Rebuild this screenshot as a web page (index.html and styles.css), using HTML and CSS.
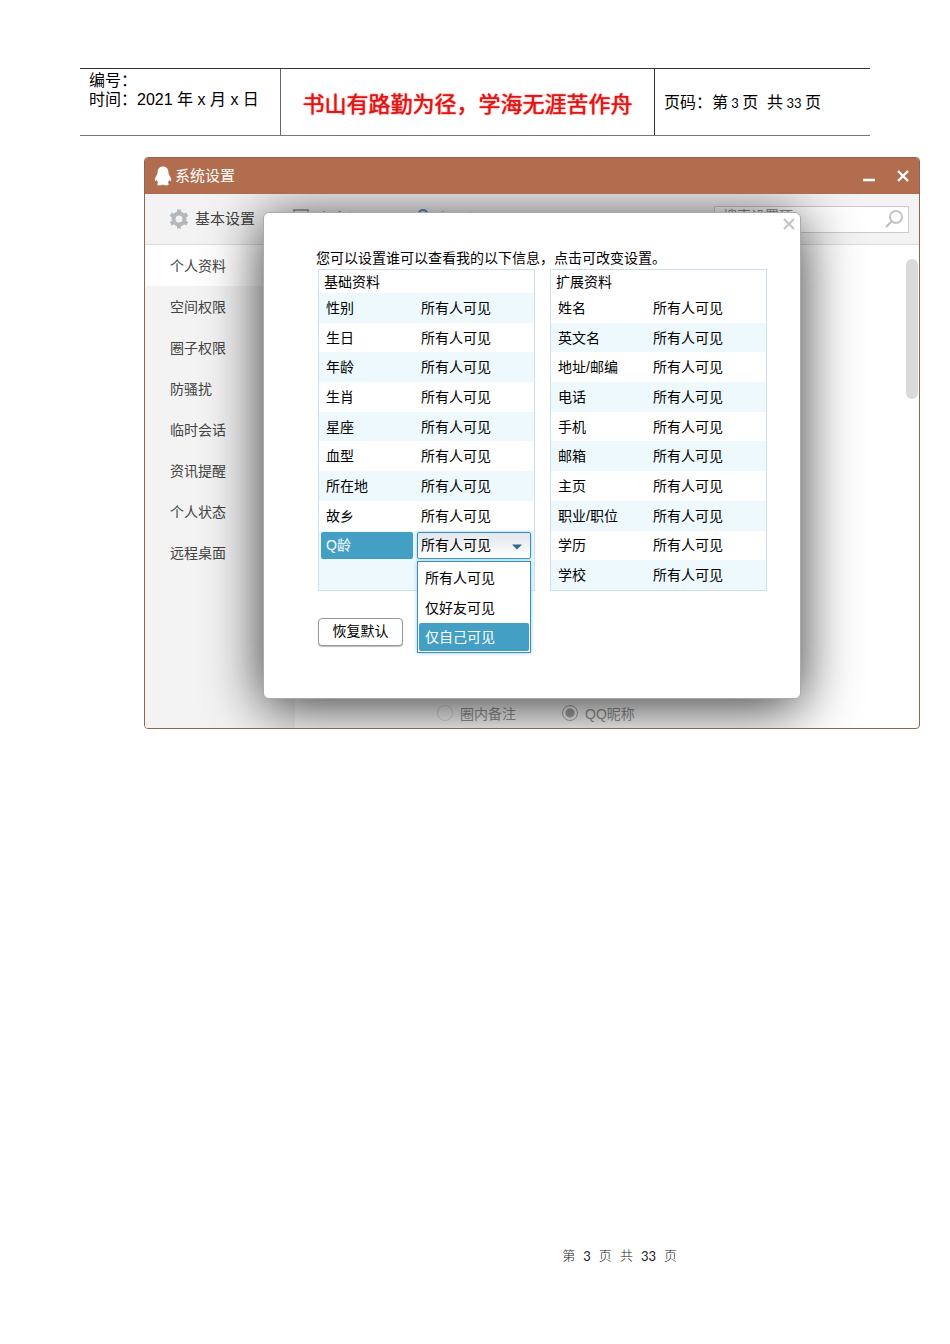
FILE: index.html
```html
<!DOCTYPE html>
<html lang="zh-CN">
<head>
  <meta charset="UTF-8" />
  <meta name="viewport" content="width=device-width, initial-scale=1" />
  <title>系统设置</title>
  <link rel="stylesheet" href="styles.css">
</head>
<body>

  <header class="page-header">
    <div class="doc-info">
      <div>编号：</div>
      <div>时间：2021 年 x 月 x 日</div>
    </div>
    <div class="motto">书山有路勤为径，学海无涯苦作舟</div>
    <div class="page-no">页码：第<span class="num"> 3 </span>页&nbsp; 共<span class="num"> 33 </span>页</div>
  </header>

  <main class="window">
    <div class="title-bar">
      <svg class="penguin" width="18" height="20" viewBox="0 0 18 20" aria-hidden="true">
        <path fill="#fff" d="M9 0.5C5.4 0.5 3.6 3 3.6 6.2C3.6 7.2 3.3 8 2.6 9.2C1.4 11 0.6 13 0.9 14.6C1.2 15.6 2.1 14.8 2.8 13.8C3 15 3.5 15.9 4.2 16.7C3 17.2 2.8 19.4 5.2 19.4C7 19.4 8.4 19 9 18.5C9.6 19 11 19.4 12.8 19.4C15.2 19.4 15 17.2 13.8 16.7C14.5 15.9 15 15 15.2 13.8C15.9 14.8 16.8 15.6 17.1 14.6C17.4 13 16.6 11 15.4 9.2C14.7 8 14.4 7.2 14.4 6.2C14.4 3 12.6 0.5 9 0.5Z"/>
      </svg>
      <h1>系统设置</h1>
      <button type="button" class="icon-btn" aria-label="最小化">
        <svg width="14" height="14" viewBox="0 0 14 14"><path d="M1 11H13" stroke="#fff" stroke-width="2.6"/></svg>
      </button>
      <button type="button" class="icon-btn" aria-label="关闭">
        <svg width="14" height="14" viewBox="0 0 14 14"><path d="M2 2L12 12M12 2L2 12" stroke="#fff" stroke-width="2.4"/></svg>
      </button>
    </div>

    <div class="window-body">
      <nav class="tabs">
        <a href="#basic" class="tab">
          <svg width="20" height="20" viewBox="0 0 20 20" aria-hidden="true">
            <circle cx="10" cy="10" r="5.5" fill="none" stroke="#b3b8bc" stroke-width="4"/>
            <path d="M10 0.5V3.5M10 16.5V19.5M1.8 5.2L4.4 6.8M15.6 13.2L18.2 14.8M1.8 14.8L4.4 13.2M15.6 6.8L18.2 5.2" stroke="#b3b8bc" stroke-width="4"/>
          </svg>
          <span>基本设置</span>
        </a>
        <a href="#safe" class="tab">
          <svg width="20" height="20" viewBox="0 0 20 20" aria-hidden="true">
            <path d="M3 1H17V18H3ZM3 4H17" fill="none" stroke="#a0a6ab" stroke-width="2"/>
          </svg>
          <span>安全设置</span>
        </a>
        <a href="#privacy" class="tab tab-active">
          <svg width="20" height="20" viewBox="0 0 20 20" aria-hidden="true">
            <path d="M5.5 9V5.5A4.5 4.5 0 0 1 14.5 5.5V9" fill="none" stroke="#4a90b8" stroke-width="2"/>
            <rect x="3" y="9" width="14" height="9" fill="#4a90b8"/>
          </svg>
          <span>权限设置</span>
        </a>
        <label class="search">
          <input type="text" placeholder="搜索设置项" aria-label="搜索设置项">
          <svg width="20" height="20" viewBox="0 0 20 20" aria-hidden="true">
            <circle cx="12" cy="8" r="6" fill="none" stroke="#c4c4c4" stroke-width="2"/>
            <path d="M7.5 12.5L2 18" stroke="#c4c4c4" stroke-width="2.4"/>
          </svg>
        </label>
      </nav>

      <div class="columns">
        <nav class="sidebar">
          <a href="#profile" class="active">个人资料</a>
          <a href="#zone">空间权限</a>
          <a href="#circle">圈子权限</a>
          <a href="#block">防骚扰</a>
          <a href="#temp">临时会话</a>
          <a href="#news">资讯提醒</a>
          <a href="#status">个人状态</a>
          <a href="#remote">远程桌面</a>
        </nav>
        <div class="content">
          <div class="scroll-thumb"></div>
          <div class="name-options">
            <label><input type="radio" name="display" value="note">圈内备注</label>
            <label><input type="radio" name="display" value="nick" checked>QQ昵称</label>
          </div>
        </div>
      </div>

      <div class="dialog" role="dialog" aria-label="资料权限">
        <button type="button" class="dialog-close" aria-label="关闭">
          <svg width="12" height="12" viewBox="0 0 12 12"><path d="M1 1L11 11M11 1L1 11" stroke="#c6c6c6" stroke-width="2.2"/></svg>
        </button>
        <p class="intro">您可以设置谁可以查看我的以下信息，点击可改变设置。</p>
        <div class="tables">
          <table>
            <colgroup><col class="col-name"><col></colgroup>
            <thead><tr><th colspan="2">基础资料</th></tr></thead>
            <tbody class="shade-odd">
              <tr><td>性别</td><td>所有人可见</td></tr>
              <tr><td>生日</td><td>所有人可见</td></tr>
              <tr><td>年龄</td><td>所有人可见</td></tr>
              <tr><td>生肖</td><td>所有人可见</td></tr>
              <tr><td>星座</td><td>所有人可见</td></tr>
              <tr><td>血型</td><td>所有人可见</td></tr>
              <tr><td>所在地</td><td>所有人可见</td></tr>
              <tr><td>故乡</td><td>所有人可见</td></tr>
              <tr class="editing">
                <td><label for="qage">Q龄</label></td>
                <td>
                  <div class="picker">
                    <select id="qage">
                      <option>所有人可见</option>
                      <option>仅好友可见</option>
                      <option>仅自己可见</option>
                    </select>
                    <svg class="caret" width="10" height="6" viewBox="0 0 10 6" aria-hidden="true"><path d="M0 0.5H10L5 5.5Z" fill="#2d6a88"/></svg>
                    <div class="menu" role="listbox" aria-label="Q龄">
                      <button type="button" role="option">所有人可见</button>
                      <button type="button" role="option">仅好友可见</button>
                      <button type="button" role="option" class="selected" aria-selected="true">仅自己可见</button>
                    </div>
                  </div>
                </td>
              </tr>
              <tr class="blank"><td>&nbsp;</td><td>&nbsp;</td></tr>
            </tbody>
          </table>
          <table>
            <colgroup><col class="col-name"><col></colgroup>
            <thead><tr><th colspan="2">扩展资料</th></tr></thead>
            <tbody class="shade-even">
              <tr><td>姓名</td><td>所有人可见</td></tr>
              <tr><td>英文名</td><td>所有人可见</td></tr>
              <tr><td>地址/邮编</td><td>所有人可见</td></tr>
              <tr><td>电话</td><td>所有人可见</td></tr>
              <tr><td>手机</td><td>所有人可见</td></tr>
              <tr><td>邮箱</td><td>所有人可见</td></tr>
              <tr><td>主页</td><td>所有人可见</td></tr>
              <tr><td>职业/职位</td><td>所有人可见</td></tr>
              <tr><td>学历</td><td>所有人可见</td></tr>
              <tr><td>学校</td><td>所有人可见</td></tr>
            </tbody>
          </table>
        </div>
        <button type="button" class="reset-btn">恢复默认</button>
      </div>
    </div>
  </main>

  <footer class="page-footer">
    <span>第</span><span class="num">3</span><span>页</span><span>共</span><span class="num">33</span><span>页</span>
  </footer>

</body>
</html>
```
FILE: styles.css
```css
* {
  box-sizing: border-box;
}
body {
  margin: 0;
  min-height: 100vh;
  padding: 68px 80px 76px;
  display: flex;
  flex-direction: column;
  background: #fff;
  color: #000;
  font-family: "Liberation Sans", "Noto Sans CJK SC", sans-serif;
  font-size: 14px;
}
a {
  color: inherit;
  text-decoration: none;
}
button, input, select {
  font: inherit;
}

/* Page header */
.page-header {
  display: grid;
  grid-template-columns: 201px 1fr 215px;
  min-height: 68px;
  border-top: 1px solid #333;
  border-bottom: 1px solid #777;
  font-size: 16px;
  line-height: 19px;
}
.doc-info {
  padding: 2px 9px;
  border-right: 1px solid #666;
  white-space: nowrap;
}
.motto {
  display: flex;
  align-items: center;
  justify-content: center;
  padding-top: 4px;
  border-right: 1px solid #333;
  color: #e01515;
  font-size: 22px;
  white-space: nowrap;
  text-shadow: 0 0 1px #e01515, 0 0 2px #f99;
}
.page-no {
  align-self: center;
  padding: 2px 0 0 9px;
  white-space: nowrap;
}
.num {
  font-family: Lato, sans-serif;
  font-size: 13px;
}

/* Settings window */
.window {
  margin: 21px -50px 0 64px;
  border: 1px solid #8b6654;
  border-radius: 4px;
  overflow: hidden;
}
.title-bar {
  display: flex;
  align-items: center;
  height: 36px;
  padding: 0 9px;
  background: #b16d4d;
  color: #fff;
}
.title-bar h1 {
  flex: 1;
  margin: 0 0 0 3px;
  padding-bottom: 4px;
  font-size: 15px;
  font-weight: 400;
}
.icon-btn {
  display: flex;
  margin-left: 20px;
  padding: 0;
  border: 0;
  background: none;
}
.window-body {
  position: relative;
  overflow: hidden;
}
.tabs {
  display: flex;
  align-items: center;
  height: 51px;
  padding: 0 10px 0 24px;
  background: #f3f3f3;
  border-bottom: 1px solid #dcdcdc;
  color: #444;
  font-size: 15px;
}
.tab {
  display: flex;
  align-items: center;
  gap: 6px;
  margin-right: 36px;
}
.tab span {
  padding-bottom: 4px;
}
.tab-active {
  color: #3d88b5;
}
.search {
  display: flex;
  align-items: center;
  width: 195px;
  height: 27px;
  margin-left: auto;
  padding: 0 4px 0 8px;
  background: #fff;
  border: 1px solid #ccc;
}
.search input {
  flex: 1;
  min-width: 0;
  padding: 0 0 6px;
  border: 0;
  background: none;
  font-size: 14px;
}
.search input::placeholder {
  color: #888;
}

.columns {
  display: flex;
  height: 483px;
}
.sidebar {
  width: 150px;
  background: #f3f3f3;
  color: #444;
}
.sidebar a {
  display: block;
  height: 41px;
  padding-left: 25px;
  line-height: 42px;
}
.sidebar .active {
  background: #fff;
}
.content {
  flex: 1;
  display: flex;
  flex-direction: column;
  justify-content: space-between;
  padding: 14px 1px 5px 142px;
}
.scroll-thumb {
  align-self: flex-end;
  width: 12px;
  height: 140px;
  border-radius: 6px;
  background: #dadada;
}
.name-options {
  display: flex;
  gap: 46px;
  color: #999;
}
.name-options label {
  display: flex;
  align-items: center;
  gap: 7px;
}
.name-options input {
  appearance: none;
  width: 16px;
  height: 16px;
  margin: 0;
  border: 1px solid #ddd;
  border-radius: 50%;
}
.name-options input:checked {
  border-color: #aaa;
  background: radial-gradient(circle, #aaa 4px, transparent 5px);
}

/* Dialog over the window */
.dialog {
  position: absolute;
  top: 18px;
  left: 118px;
  width: 538px;
  height: 487px;
  padding: 35px 33px 0 54px;
  border: 1px solid #aaa;
  border-radius: 6px;
  background: #fff;
  box-shadow: 0 8px 56px rgba(0, 0, 0, 0.8);
}
.dialog-close {
  position: absolute;
  top: 5px;
  right: 5px;
  display: flex;
  padding: 0;
  border: 0;
  background: none;
}
.intro {
  margin: 0 0 1px -2px;
  line-height: 20px;
}
.tables {
  display: flex;
  gap: 15px;
}
table {
  width: 217px;
  height: 322px;
  table-layout: fixed;
  border: 1px solid #cfe0ec;
  border-collapse: separate;
  border-spacing: 0;
}
.col-name {
  width: 95px;
}
th {
  height: 23px;
  padding: 0 0 0 5px;
  font-weight: 400;
  line-height: 20px;
  text-align: left;
}
td {
  height: 29px;
  padding: 0 0 0 7px;
  line-height: 20px;
}
.shade-odd tr:nth-child(odd),
.shade-even tr:nth-child(even),
.blank {
  background: #edf9fd;
}
.editing td {
  padding: 0 3px 0 2px;
}
.editing label {
  display: block;
  height: 27px;
  margin-right: -2px;
  padding-left: 5px;
  border-radius: 2px;
  background: #449fc4;
  color: #fff;
  line-height: 27px;
}
.picker {
  position: relative;
  margin-left: 1px;
}
.picker select {
  appearance: none;
  display: block;
  width: 100%;
  height: 27px;
  padding: 0 3px;
  border: 1px solid #3d8ebc;
  border-radius: 2px;
  background: linear-gradient(#e2e7ea, #fff);
  box-shadow: 0 0 3px #9ccbe8;
  color: #000;
}
.caret {
  position: absolute;
  top: 12px;
  right: 9px;
}
.menu {
  position: absolute;
  top: 29px;
  left: 0;
  right: 0;
  padding: 1px;
  border: 1px solid #3d8ebc;
  background: #fff;
  box-shadow: 0 0 4px #9ccbe8;
}
.menu button {
  display: block;
  width: 100%;
  height: 30px;
  padding: 0 0 0 6px;
  border: 0;
  border-radius: 2px;
  background: none;
  text-align: left;
}
.menu .selected {
  height: 28px;
  background: #449fc4;
  color: #fff;
}
.reset-btn {
  width: 85px;
  height: 28px;
  margin-top: 27px;
  padding: 0 0 4px;
  border: 1px solid #999;
  border-radius: 4px;
  background: #fff;
  box-shadow: 0 1px 1px #bbb;
}

/* Page footer */
.page-footer {
  display: flex;
  justify-content: flex-end;
  align-items: center;
  gap: 8px;
  margin-top: auto;
  padding-right: 193px;
  color: #222;
  font-size: 13px;
  font-weight: 300;
  line-height: 24px;
}
.page-footer .num {
  font-weight: 400;
}
```
